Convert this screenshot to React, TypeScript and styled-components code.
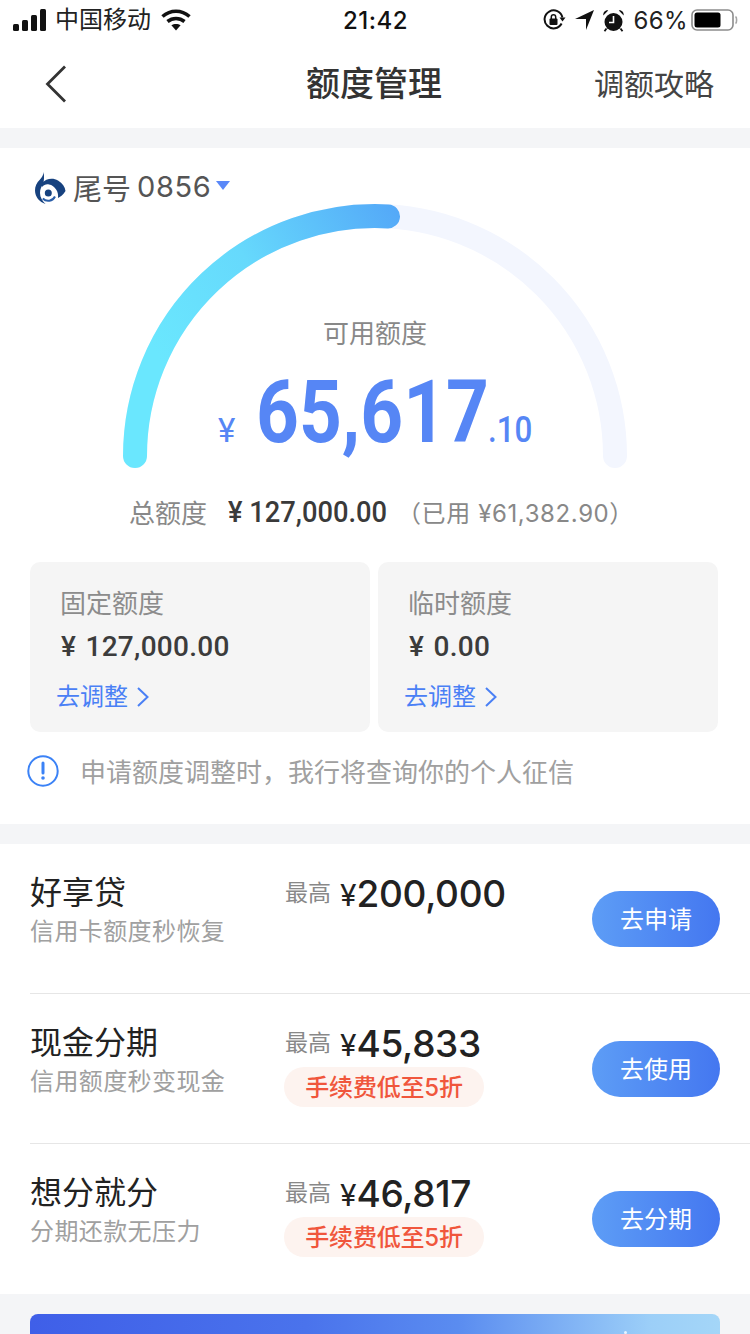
import * as React from 'react';
import styled, { createGlobalStyle } from 'styled-components';

const GlobalStyle = createGlobalStyle`
  html, body {
    margin: 0;
    padding: 0;
    background: #f4f5f7;
  }
  * {
    box-sizing: border-box;
  }
`;

const cjk = `Inter, "Noto Sans CJK SC", sans-serif`;
const din = `Roboto, "Noto Sans CJK SC", sans-serif`;

const Page = styled.div`
  width: 750px;
  height: 1334px;
  overflow: hidden;
  background: #f4f5f7;
  font-family: ${cjk};
  display: flex;
  flex-direction: column;
  gap: 20px;
  > * {
    flex: none;
  }
`;

const TopBlock = styled.div`
  background: #fff;
  height: 128px;
`;

const StatusBar = styled.div`
  height: 40px;
  display: grid;
  grid-template-columns: 1fr auto 1fr;
  align-items: center;
  padding: 0 12px 0 13px;
  color: #111;
  font-size: 24px;
`;

const StatusLeft = styled.div`
  display: flex;
  align-items: center;
`;

const Carrier = styled.span`
  margin: 0 10px 0 9px;
  font-size: 24px;
  line-height: 40px;
  color: #222;
`;

const Clock = styled.span`
  font-weight: 500;
  font-size: 24px;
  letter-spacing: 0.5px;
`;

const StatusRight = styled.div`
  display: flex;
  align-items: center;
  justify-content: flex-end;
  gap: 9px;
`;

const BatteryText = styled.span`
  font-size: 24px;
  letter-spacing: 0.4px;
  color: #222;
  margin-right: -6px;
`;

const NavBar = styled.div`
  height: 88px;
  display: grid;
  grid-template-columns: 1fr auto 1fr;
  align-items: center;
  padding: 0 36px;
`;

const BackSlot = styled.div`
  display: flex;
  padding-left: 9px;
`;

const NavTitle = styled.div`
  font-size: 34px;
  font-weight: 500;
  color: #333;
  padding: 0 2px 5px 0;
`;

const NavLink = styled.div`
  font-size: 30px;
  color: #444;
  text-align: right;
  padding-bottom: 4px;
`;

const QuotaPanel = styled.section`
  background: #fff;
  height: 676px;
  padding: 20px 30px 0;
`;

const CardPicker = styled.div`
  display: flex;
  align-items: center;
  height: 36px;
  margin-left: 4px;
  padding-top: 1px;
  color: #555;
  font-size: 29px;
`;

const LogoSlot = styled.div`
  display: flex;
  margin-top: 2px;
`;

const PickerName = styled.span`
  margin-left: 7px;
`;

const PickerNumber = styled.span`
  margin-left: 6px;
  letter-spacing: 0.6px;
`;

const PickerArrow = styled.span`
  width: 0;
  height: 0;
  margin: -3px 0 0 5px;
  border-left: 7px solid transparent;
  border-right: 7px solid transparent;
  border-top: 9px solid #5a88f8;
`;

const GaugeBox = styled.div`
  position: relative;
  width: 504px;
  height: 264px;
  margin: 0 auto;
  padding-top: 113px;
  text-align: center;
`;

const GaugeArt = styled.svg`
  position: absolute;
  top: 0;
  left: 0;
`;

const GaugeLabel = styled.div`
  position: relative;
  font-size: 26px;
  line-height: 34px;
  color: #888;
`;

const AmountRow = styled.div`
  position: relative;
  display: flex;
  align-items: baseline;
  margin: 9px 0 0 95px;
  color: #5686f5;
  font-family: ${din};
  white-space: nowrap;
`;

const AmountYen = styled.span`
  font-size: 33px;
  width: 38px;
  text-align: left;
`;

const Squeezed = styled.span<{ $width: number; $squeeze: number; $size: number; $weight: number }>`
  display: inline-block;
  width: ${p => p.$width}px;
  font-size: ${p => p.$size}px;
  font-weight: ${p => p.$weight};
  text-align: left;
  transform: scaleX(${p => p.$squeeze});
  transform-origin: left center;
`;

const TotalRow = styled.div`
  display: flex;
  align-items: center;
  height: 40px;
  margin: 23px 0 0 99px;
  font-size: 26px;
  color: #888;
  white-space: nowrap;
`;

const TotalValue = styled.div`
  display: flex;
  align-items: center;
  margin-left: 21px;
  color: #3a3a3a;
  font-family: ${din};
`;

const UsedNote = styled.span`
  margin-left: 9px;
  color: #888;
  font-size: 24px;
  letter-spacing: 0.6px;
`;

const CardGrid = styled.div`
  display: grid;
  grid-template-columns: 340px 340px;
  gap: 8px;
  margin-top: 31px;
`;

const QuotaCard = styled.div`
  height: 170px;
  border-radius: 10px;
  background: #f5f5f5;
  padding: 22px 26px;
`;

const CardLabel = styled.div`
  margin-left: 4px;
  font-size: 26px;
  line-height: 40px;
  color: #8c8c8c;
`;

const CardValue = styled.div`
  margin: 3px 0 0 5px;
  font-size: 28px;
  line-height: 40px;
  font-weight: 500;
  letter-spacing: 0.3px;
  word-spacing: 2px;
  color: #3c3c3c;
  font-family: ${din};
`;

const AdjustLink = styled.div`
  display: flex;
  align-items: center;
  gap: 8px;
  margin-top: 10px;
  font-size: 24px;
  line-height: 40px;
  color: #4a80f5;
`;

const Notice = styled.div`
  display: flex;
  align-items: center;
  gap: 21px;
  margin: 20px 0 0 -3px;
  font-size: 26px;
  color: #a0a0a0;
`;

const OffersPanel = styled.section`
  background: #fff;
  height: 450px;
  padding-left: 30px;
`;

const OfferRow = styled.div<{ $first?: boolean }>`
  height: ${p => (p.$first ? '149px' : '150px')};
  display: grid;
  grid-template-columns: 255px 307px 128px;
  align-items: start;
  border-top: ${p => (p.$first ? 'none' : '1px solid #e6e6e6')};
  padding-top: 29px;
`;

const OfferTitle = styled.div`
  font-size: 32px;
  line-height: 40px;
  color: #222;
`;

const OfferSub = styled.div`
  font-size: 24px;
  line-height: 38px;
  letter-spacing: 0.4px;
  color: #a0a0a0;
`;

const MaxLine = styled.div`
  display: flex;
  align-items: center;
  height: 40px;
  white-space: nowrap;
`;

const MaxLabel = styled.span`
  font-size: 23px;
  color: #888;
  margin: 0 9px 4px 0;
`;

const MaxYen = styled.span`
  font-size: 30px;
  color: #222;
  margin-top: 3px;
`;

const MaxValue = styled.span`
  font-size: 37px;
  font-weight: 500;
  color: #222;
  letter-spacing: -0.3px;
`;

const FeeTag = styled.div`
  display: flex;
  align-items: center;
  justify-content: center;
  width: 200px;
  height: 40px;
  margin: 4px 0 0 -1px;
  padding-bottom: 4px;
  border-radius: 20px;
  background: #fdf3ef;
  color: #f0563c;
  font-size: 24px;
  font-weight: 500;
  letter-spacing: -0.2px;
  white-space: nowrap;
`;

const ActionButton = styled.div`
  display: flex;
  align-items: center;
  justify-content: center;
  height: 56px;
  margin-top: 18px;
  padding-bottom: 3px;
  border-radius: 28px;
  background: linear-gradient(90deg, #5d9df6, #4477f0);
  color: #fff;
  font-size: 24px;
`;

const Banner = styled.div`
  position: relative;
  height: 60px;
  margin: 0 30px;
  border-radius: 8px 8px 0 0;
  background: linear-gradient(90deg, #3f5fe8 0%, #4a73ec 40%, #5a8cf0 62%, #9ccff8 90%, #a4d6f8 100%);
  &::after {
    content: '';
    position: absolute;
    top: 17px;
    left: 594px;
    width: 3px;
    height: 3px;
    border-radius: 50%;
    background: #e8f4ff;
  }
`;

const Chevron: React.FC = () => (
  <svg width="14" height="22" viewBox="0 0 14 22" fill="none">
    <path d="M2 2l9.500 9L2 20" stroke="#4a80f5" strokeWidth="2" />
  </svg>
);

const Signal: React.FC = () => (
  <svg width="33" height="22" viewBox="0 0 33 22" fill="#111">
    <rect x="0" y="15" width="6" height="7" rx="1.500" />
    <rect x="9" y="11" width="6" height="11" rx="1.500" />
    <rect x="18" y="6" width="6" height="16" rx="1.500" />
    <rect x="27" y="0" width="6" height="22" rx="1.500" />
  </svg>
);

const Wifi: React.FC = () => (
  <svg width="30" height="22" viewBox="0 0 30 22" fill="none" stroke="#111" strokeWidth="3.600">
    <path d="M1.500 7.500C9.500 0.500 20.500 0.500 28.500 7.500" />
    <path d="M6.500 12.500C11.500 8.500 18.500 8.500 23.500 12.500" />
    <path d="M15 21.500l-4.600-5.200c2.600-1.800 6.600-1.800 9.200 0z" fill="#111" stroke="none" />
  </svg>
);

const RotationLock: React.FC = () => (
  <svg width="23" height="22" viewBox="0 0 23 22" fill="none">
    <path d="M18.600 14.500A9 9 0 1 1 19.400 8.500" stroke="#111" strokeWidth="2" />
    <path d="M22.500 8.500l-3 4-3-4z" fill="#111" />
    <rect x="6.500" y="9.500" width="8" height="6.500" rx="1" fill="#111" />
    <path d="M8.300 10V8a2.200 2.200 0 0 1 4.400 0v2" stroke="#111" strokeWidth="1.500" />
  </svg>
);

const LocationArrow: React.FC = () => (
  <svg width="19" height="20" viewBox="0 0 19 20" fill="#111">
    <path d="M19 0L11 20V9H0z" />
  </svg>
);

const Alarm: React.FC = () => (
  <svg width="21" height="23" viewBox="0 0 21 23" fill="#111">
    <circle cx="10.500" cy="13" r="9" />
    <path d="M0.300 6.500C0 3.500 2 1 5.200 1.400z M20.700 6.500C21 3.500 19 1 15.800 1.400z" />
    <path d="M3.500 19.500l-2 2.800M17.500 19.500l2 2.800" stroke="#111" strokeWidth="1.800" />
    <path d="M10.500 7v6.500H6" stroke="#fff" strokeWidth="1.600" fill="none" />
  </svg>
);

const Battery: React.FC = () => (
  <svg width="47" height="22" viewBox="0 0 47 22" fill="none">
    <rect x="1" y="1" width="41" height="20" rx="5" stroke="#8c8c8c" strokeWidth="1.600" />
    <rect x="3.500" y="3.500" width="26" height="15" rx="2.500" fill="#000" />
    <path d="M44.500 7.500c1.500.8 1.500 6.200 0 7" stroke="#a5a5a5" strokeWidth="1.600" />
  </svg>
);

const BackArrow: React.FC = () => (
  <svg width="22" height="38" viewBox="0 0 22 38" fill="none">
    <path d="M20 1.500L2.500 19 20 36.500" stroke="#333" strokeWidth="2.800" />
  </svg>
);

const BankLogo: React.FC = () => (
  <svg width="32" height="32" viewBox="0 0 32 32" fill="#17427f">
    <path d="M9.500 0C9.500 3 8 5 6 7.500 2.500 11 1 14 1 18.500 1 25 5.500 30 11.500 32 8.500 29 6 25.500 6 21c0-4 1.500-6.500 3-8.500C10 9 10.500 4 9.500 0z" />
    <path d="M8 11C12 6.500 19 5.500 24 8.500c4.500 2.500 7 6.500 7.500 10.500-2.500 4-5.500 6-7.500 7 1-6-3-12.500-9-13.500-3-.5-5 .5-7 2.500z" />
    <path d="M8.800 26.500A7.500 7.500 0 0 0 21 24.500" fill="none" stroke="#2a5ea8" strokeWidth="2" />
    <circle cx="14.300" cy="21" r="3.500" />
  </svg>
);

const InfoIcon: React.FC = () => (
  <svg width="32" height="32" viewBox="0 0 32 32" fill="none">
    <circle cx="16" cy="16" r="14.700" stroke="#3b82f6" strokeWidth="2" />
    <path d="M16 8v10" stroke="#3b82f6" strokeWidth="3" strokeLinecap="round" />
    <circle cx="16" cy="23" r="1.800" fill="#3b82f6" />
  </svg>
);

const Gauge: React.FC = () => (
  <GaugeArt width="504" height="264" viewBox="0 0 504 264" fill="none">
    <defs>
      <linearGradient id="gaugeFill" gradientUnits="userSpaceOnUse" x1="40" y1="160" x2="277" y2="12">
        <stop offset="0" stopColor="#6ae7fe" />
        <stop offset="0.45" stopColor="#66d9fc" />
        <stop offset="1" stopColor="#54a9f8" />
      </linearGradient>
    </defs>
    <path d="M12 252A240 240 0 0 1 492 252" stroke="#f3f6fe" strokeWidth="24" strokeLinecap="round" />
    <path d="M12 252A240 240 0 0 1 265 12.400" stroke="url(#gaugeFill)" strokeWidth="24" strokeLinecap="round" />
  </GaugeArt>
);

const offers = [
  { title: '好享贷', sub: '信用卡额度秒恢复', max: '200,000', action: '去申请', fee: false },
  { title: '现金分期', sub: '信用额度秒变现金', max: '45,833', action: '去使用', fee: true },
  { title: '想分就分', sub: '分期还款无压力', max: '46,817', action: '去分期', fee: true },
];

const quotas = [
  { label: '固定额度', value: '¥ 127,000.00' },
  { label: '临时额度', value: '¥ 0.00' },
];

const App: React.FC = () => {
  return (
    <Page>
      <GlobalStyle />
      <TopBlock>
        <StatusBar>
          <StatusLeft>
            <Signal />
            <Carrier>中国移动</Carrier>
            <Wifi />
          </StatusLeft>
          <Clock>21:42</Clock>
          <StatusRight>
            <RotationLock />
            <LocationArrow />
            <Alarm />
            <BatteryText>66%</BatteryText>
            <Battery />
          </StatusRight>
        </StatusBar>
        <NavBar>
          <BackSlot>
            <BackArrow />
          </BackSlot>
          <NavTitle>额度管理</NavTitle>
          <NavLink>调额攻略</NavLink>
        </NavBar>
      </TopBlock>

      <QuotaPanel>
        <CardPicker>
          <LogoSlot>
            <BankLogo />
          </LogoSlot>
          <PickerName>尾号</PickerName>
          <PickerNumber>0856</PickerNumber>
          <PickerArrow />
        </CardPicker>
        <GaugeBox>
          <Gauge />
          <GaugeLabel>可用额度</GaugeLabel>
          <AmountRow>
            <AmountYen>¥</AmountYen>
            <Squeezed $width={232} $squeeze={0.85} $size={88} $weight={700}>65,617</Squeezed>
            <Squeezed $width={42} $squeeze={0.87} $size={36} $weight={500}>.10</Squeezed>
          </AmountRow>
        </GaugeBox>
        <TotalRow>
          总额度
          <TotalValue>
            <Squeezed $width={160} $squeeze={0.91} $size={30} $weight={500}>¥ 127,000.00</Squeezed>
          </TotalValue>
          <UsedNote>（已用 ¥61,382.90）</UsedNote>
        </TotalRow>
        <CardGrid>
          {quotas.map(q => (
            <QuotaCard key={q.label}>
              <CardLabel>{q.label}</CardLabel>
              <CardValue>{q.value}</CardValue>
              <AdjustLink>
                去调整
                <Chevron />
              </AdjustLink>
            </QuotaCard>
          ))}
        </CardGrid>
        <Notice>
          <InfoIcon />
          申请额度调整时，我行将查询你的个人征信
        </Notice>
      </QuotaPanel>

      <OffersPanel>
        {offers.map((o, i) => (
          <OfferRow key={o.title} $first={i === 0}>
            <div>
              <OfferTitle>{o.title}</OfferTitle>
              <OfferSub>{o.sub}</OfferSub>
            </div>
            <div>
              <MaxLine>
                <MaxLabel>最高</MaxLabel>
                <MaxYen>¥</MaxYen>
                <MaxValue>{o.max}</MaxValue>
              </MaxLine>
              {o.fee && <FeeTag>手续费低至5折</FeeTag>}
            </div>
            <ActionButton>{o.action}</ActionButton>
          </OfferRow>
        ))}
      </OffersPanel>

      <Banner />
    </Page>
  );
};

export default App;
